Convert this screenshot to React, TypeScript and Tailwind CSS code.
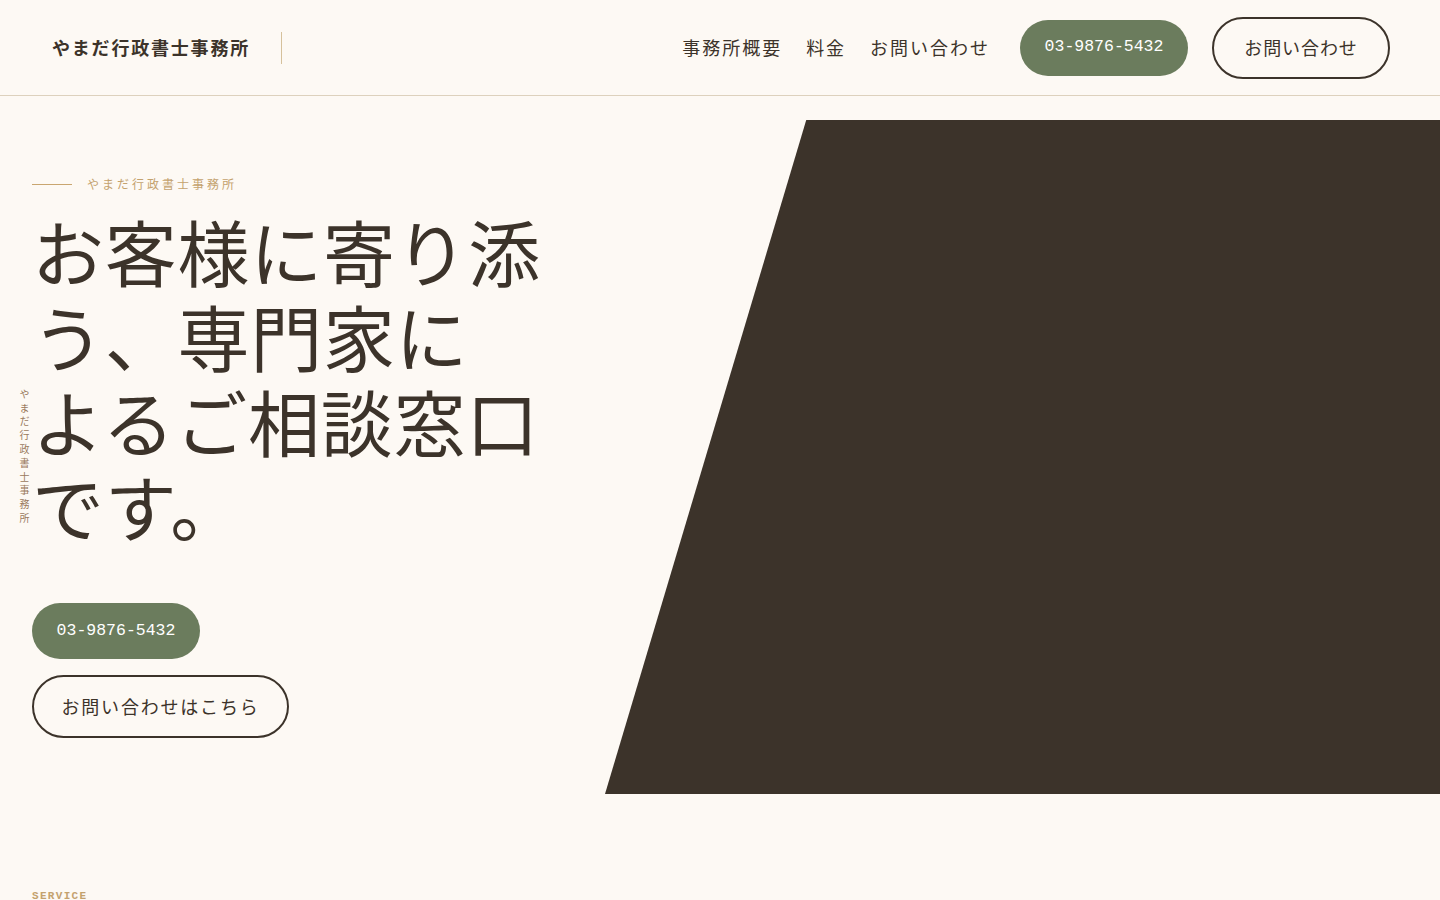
const jp = "font-['Noto_Sans_CJK_JP','Noto_Sans',sans-serif]";
const mono = "font-['Liberation_Mono','DejaVu_Sans_Mono',monospace]";

function Header() {
  return (
    <header className="flex h-[96px] items-center justify-between border-b border-[#ddd1bd] pl-[52px] pr-[50px]">
      <div className="flex items-center">
        <span className="text-[18px] font-bold tracking-[0.1em] text-[#3c332a]">やまだ行政書士事務所</span>
        <span className="ml-[31px] h-[32px] w-px bg-[#d6c19c]" />
      </div>
      <nav className="flex items-center">
        <div className="flex items-center gap-[24px] text-[18px] tracking-[0.11em] text-[#3c332a]">
          <a>事務所概要</a>
          <a>料金</a>
          <a>お問い合わせ</a>
        </div>
        <a className={`ml-[30px] flex h-[56px] w-[168px] items-center justify-center rounded-full bg-[#6b7c5d] text-[16.5px] text-white ${mono}`}>
          03-9876-5432
        </a>
        <a className="ml-[24px] flex h-[62px] w-[178px] items-center justify-center rounded-full border-2 border-[#3c332a] text-[18px] tracking-[0.05em] text-[#3c332a]">
          お問い合わせ
        </a>
      </nav>
    </header>
  );
}

function Hero() {
  return (
    <section className="relative flex pt-[24px]">
      <div className="absolute left-[17px] top-[293px] text-[10px] tracking-[0.38em] text-[#9a7a5e] [writing-mode:vertical-rl]">
        やまだ行政書士事務所
      </div>
      <div className="w-[605px] shrink-0 pl-[32px] pt-[56px]">
        <div className="flex h-[16px] items-center">
          <span className="h-px w-[40px] bg-[#c9a670]" />
          <span className="ml-[15px] text-[12px] tracking-[0.25em] text-[#c4a26e]">やまだ行政書士事務所</span>
        </div>
        <h1 className="mt-[15px] text-[72px] font-normal leading-[85px] tracking-[0.01em] text-[#3c332a]">
          <span className="block whitespace-nowrap">お客様に寄り添</span>
          <span className="block whitespace-nowrap">う、専門家に</span>
          <span className="block whitespace-nowrap">よるご相談窓口</span>
          <span className="block whitespace-nowrap">です。</span>
        </h1>
        <div className="mt-[56px] flex flex-col items-start gap-[16px]">
          <a className={`flex h-[56px] w-[168px] items-center justify-center rounded-full bg-[#6b7c5d] text-[16.5px] text-white ${mono}`}>
            03-9876-5432
          </a>
          <a className="flex h-[63px] w-[257px] items-center justify-center rounded-full border-2 border-[#3c332a] text-[18px] tracking-[0.1em] text-[#3c332a]">
            お問い合わせはこちら
          </a>
        </div>
      </div>
      <div className="h-[674px] flex-1 bg-[#3c332a] [clip-path:polygon(24.1%_0,100%_0,100%_100%,0_100%)]" />
    </section>
  );
}

export default function App() {
  return (
    <div className={`min-h-[900px] bg-[#fdf9f4] ${jp}`}>
      <Header />
      <Hero />
      <section className="px-[32px] pt-[94px]">
        <p className={`text-[11px] font-bold tracking-[0.12em] text-[#c4a26e] ${mono}`}>SERVICE</p>
      </section>
    </div>
  );
}
